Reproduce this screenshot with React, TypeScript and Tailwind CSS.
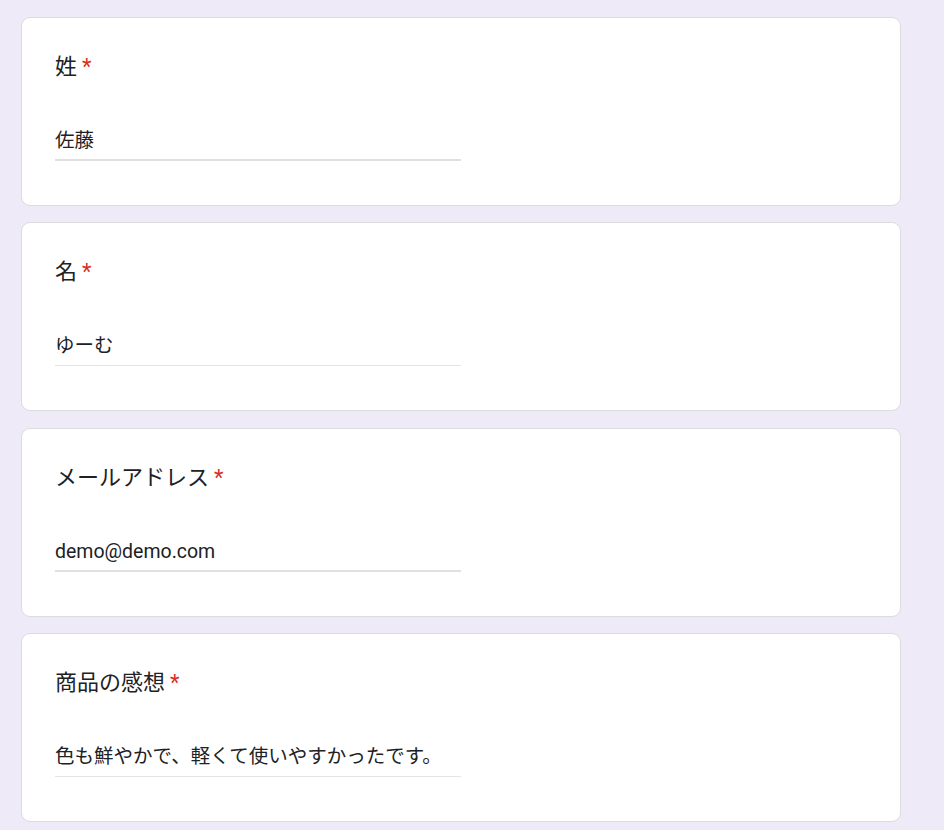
import React from "react";

type Q = { label: string; answer: string; thick: boolean };

const questions: Q[] = [
  { label: "姓", answer: "佐藤", thick: true },
  { label: "名", answer: "ゆーむ", thick: false },
  { label: "メールアドレス", answer: "demo@demo.com", thick: true },
  { label: "商品の感想", answer: "色も鮮やかで、軽くて使いやすかったです。", thick: false },
];

function Card({ q }: { q: Q }) {
  return (
    <div className="h-[189px] w-[880px] shrink-0 rounded-[9px] border border-[#dadce0] bg-white px-[33px] pt-[33px]">
      <div className="flex h-[32px] items-center text-[22px] leading-[32px] text-[#202124] [font-family:Roboto,'Noto_Sans_CJK_JP',sans-serif]">
        <span>{q.label}</span>
        <span className="ml-[5px] text-[#d93025] [font-family:Roboto,sans-serif]">*</span>
      </div>
      <div className="mt-[44px] w-[406px]">
        <div
          className={
            q.thick
              ? "h-[34px] border-b-2 border-[#e0e0e0] pt-[1px] text-[19.5px] leading-[26px] text-[#202124] [font-family:Roboto,'Noto_Sans_CJK_JP',sans-serif]"
              : "h-[34px] border-b border-[#e4e4e4] pt-[1px] text-[19.5px] leading-[26px] text-[#202124] [font-family:Roboto,'Noto_Sans_CJK_JP',sans-serif]"
          }
        >
          {q.answer}
        </div>
      </div>
    </div>
  );
}

export default function App() {
  return (
    <div className="min-h-screen w-full bg-[#eeeaf7] pl-[21px] pt-[17px] pb-[20px]">
      <div className="flex flex-col gap-[16.33px]">
        {questions.map((q) => (
          <Card key={q.label} q={q} />
        ))}
      </div>
    </div>
  );
}
